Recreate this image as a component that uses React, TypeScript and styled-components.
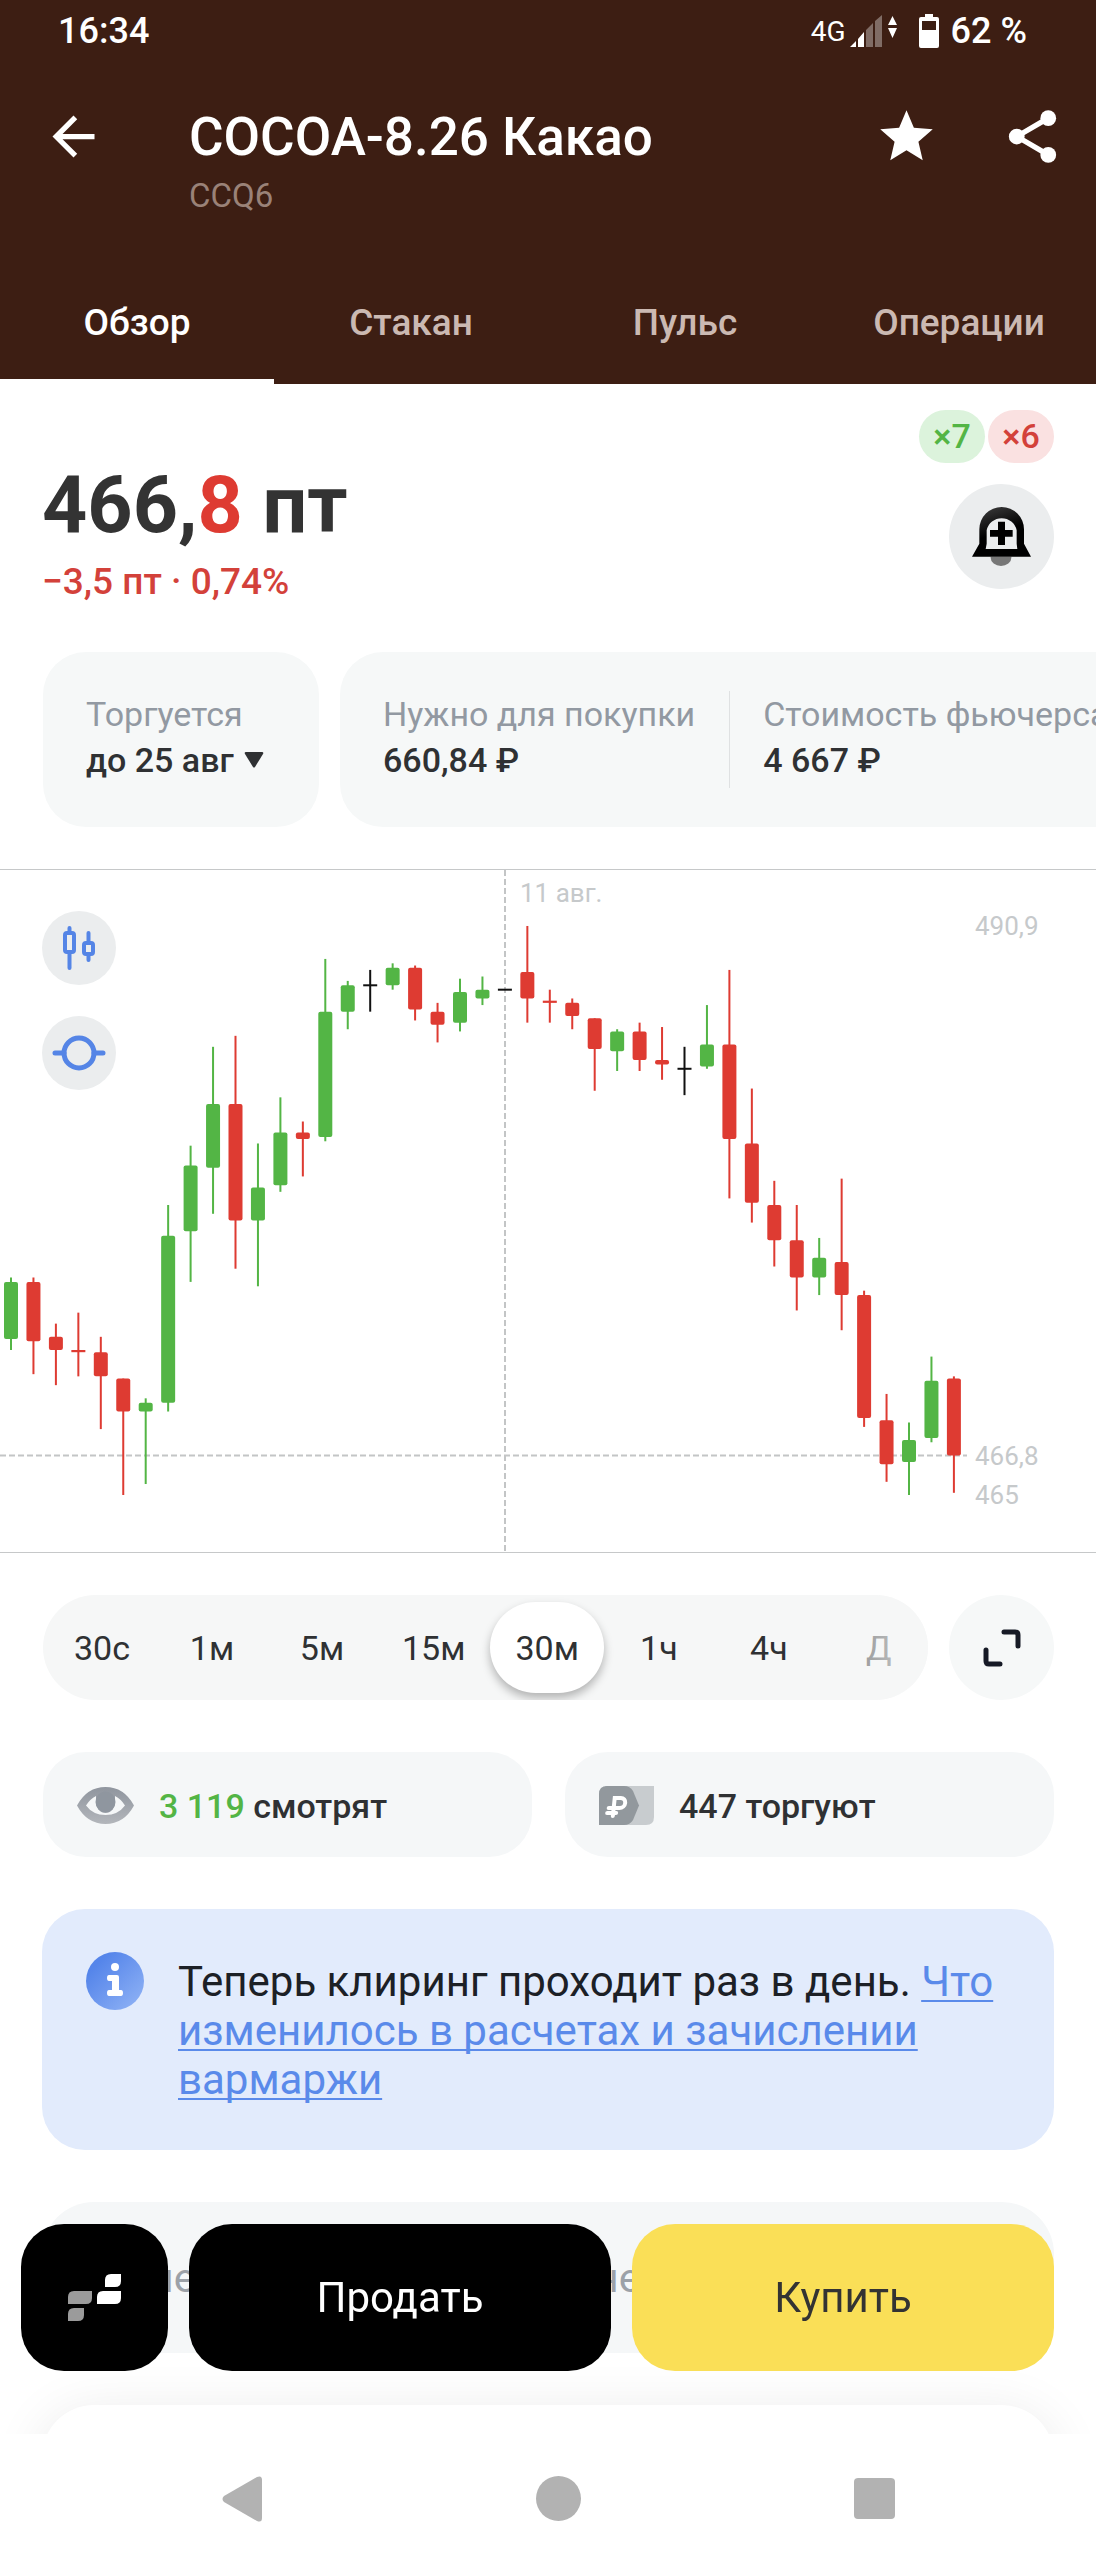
import React, { useState } from "react";
import styled, { createGlobalStyle } from "styled-components";

const GlobalStyle = createGlobalStyle`
  *, *::before, *::after { box-sizing: border-box; }
  body {
    margin: 0;
    background: #fff;
    color: #2f3133;
    font-family: Roboto, "Noto Sans", sans-serif;
  }
  button, select { font-family: inherit; }
  button {
    border: 0;
    padding: 0;
    background: none;
    color: inherit;
    cursor: pointer;
  }
`;

const GREEN = "#53b545";
const RED = "#de3b32";
const BLACK = "#111";

/* ---------- Header ---------- */

const Header = styled.header`
  background: #3d1e13;
  color: #fff;
`;

const StatusBar = styled.div`
  display: flex;
  align-items: center;
  justify-content: space-between;
  height: 62px;
  padding: 0 69px 0 58px;
  font-size: 36px;
  font-weight: 500;
`;

const StatusIcons = styled.div`
  display: flex;
  align-items: center;
`;

const Network = styled.span`
  margin-right: 3px;
  font-size: 28px;
  font-weight: 400;
`;

const SignalIcon = styled.svg`
  width: 50px;
  height: 34px;
  margin-right: 20px;
`;

const BatteryIcon = styled.svg`
  width: 20px;
  height: 34px;
  margin-right: 12px;
`;

const Toolbar = styled.div`
  display: flex;
  align-items: flex-start;
  height: 198px;
  padding: 44px 32px 0 42px;
`;

const ToolButton = styled.button`
  display: flex;
  align-items: center;
  height: 60px;
  svg {
    width: 63px;
    height: 63px;
    fill: currentColor;
  }
`;

const Heading = styled.div`
  flex: 1;
  margin-left: 84px;
`;

const Title = styled.h1`
  margin: 0 0 8px;
  font-size: 53px;
  font-weight: 500;
  line-height: 62px;
`;

const Ticker = styled.div`
  color: #9a8278;
  font-size: 33px;
  line-height: 40px;
`;

const Tools = styled.div`
  display: flex;
  gap: 63px;
`;

const Tabs = styled.nav`
  display: grid;
  grid-template-columns: repeat(4, 1fr);
`;

const Tab = styled.button<{ $active: boolean }>`
  height: 124px;
  padding-top: 5px;
  border-bottom: 5px solid ${(p) => (p.$active ? "#fff" : "transparent")};
  color: ${(p) => (p.$active ? "#fff" : "#cbb9b2")};
  font-size: 37px;
  font-weight: 500;
`;

/* ---------- Price ---------- */

const Summary = styled.section`
  display: flex;
  justify-content: space-between;
  padding: 26px 42px 0;
`;

const PriceBlock = styled.div`
  padding-top: 48px;
`;

const Price = styled.div`
  margin-bottom: 8px;
  color: #333;
  font-size: 79px;
  font-weight: 700;
  line-height: 94px;
`;

const PriceTail = styled.span`
  color: ${RED};
`;

const Change = styled.div`
  color: #d3413a;
  font-size: 37px;
  font-weight: 500;
  line-height: 44px;
`;

const SummaryAside = styled.div`
  display: flex;
  flex-direction: column;
  align-items: flex-end;
  gap: 21px;
`;

const Badges = styled.div`
  display: flex;
  gap: 3px;
`;

const Badge = styled.span<{ $tone: "up" | "down" }>`
  min-width: 66px;
  height: 53px;
  padding: 0 14px;
  border-radius: 27px;
  background: ${(p) => (p.$tone === "up" ? "#dcf3dc" : "#fae1e1")};
  color: ${(p) => (p.$tone === "up" ? GREEN : "#d3413a")};
  font-size: 34px;
  font-weight: 500;
  line-height: 53px;
  text-align: center;
`;

const RoundButton = styled.button<{ $size: number; $tone: string }>`
  display: flex;
  flex: none;
  align-items: center;
  justify-content: center;
  width: ${(p) => p.$size}px;
  height: ${(p) => p.$size}px;
  border-radius: 50%;
  background: ${(p) => p.$tone};
`;

/* ---------- Contract facts ---------- */

const Facts = styled.section`
  display: flex;
  gap: 21px;
  margin: 48px 0 42px;
  padding-left: 43px;
  overflow: hidden;
`;

const FactCard = styled.div`
  display: flex;
  flex: none;
  min-width: 276px;
  height: 175px;
  padding: 39px 43px;
  border-radius: 43px;
  background: #f6f8f8;
`;

const Fact = styled.div`
  display: flex;
  flex-direction: column;
  font-size: 34px;
  line-height: 46px;
  white-space: nowrap;
  & + & {
    margin-left: 34px;
    padding-left: 33px;
    border-left: 1px solid #dfe1e2;
  }
`;

const FactLabel = styled.label`
  color: #9299a2;
`;

const FactValue = styled.span`
  color: #2f3133;
  font-weight: 500;
`;

const Expiry = styled.span`
  display: flex;
  align-items: center;
  gap: 10px;
`;

const ExpirySelect = styled.select`
  height: 46px;
  padding: 0;
  border: 0;
  appearance: none;
  background: none;
  color: #2f3133;
  font-size: 34px;
  font-weight: 500;
`;

/* ---------- Chart ---------- */

const ChartPanel = styled.section`
  position: relative;
  border-top: 1px solid #c6c8c9;
  border-bottom: 1px solid #c6c8c9;
`;

const ChartSvg = styled.svg`
  display: block;
  width: 100%;
  text {
    fill: #c6c9cb;
    font-size: 26px;
  }
`;

const ChartTools = styled.div`
  position: absolute;
  top: 41px;
  left: 42px;
  display: flex;
  flex-direction: column;
  gap: 31px;
`;

type Color = "g" | "r" | "k";
/* colour, high, body top, body bottom, low — in 0.1 pt ticks above 465 */
const CANDLES: [Color, number, number, number, number][] = [
  ["g", 99, 97, 71, 66], ["r", 99, 97, 70, 55], ["r", 78, 72, 66, 50], ["r", 83, 66, 65, 54],
  ["r", 72, 65, 54, 30], ["r", 53, 53, 38, 0], ["g", 44, 42, 38, 5], ["g", 132, 118, 42, 38],
  ["g", 159, 150, 120, 97], ["g", 204, 178, 149, 128], ["r", 209, 178, 125, 103], ["g", 160, 140, 125, 95],
  ["g", 181, 165, 141, 138], ["r", 170, 165, 162, 145], ["g", 244, 220, 163, 161], ["g", 234, 232, 220, 212],
  ["k", 239, 232, 232, 220], ["g", 242, 240, 232, 230], ["r", 241, 240, 221, 216], ["r", 224, 220, 214, 206],
  ["g", 235, 229, 215, 211], ["g", 236, 230, 226, 223], ["k", 230, 230, 230, 230], ["r", 259, 238, 226, 215],
  ["r", 230, 225, 224, 215], ["r", 226, 224, 218, 212], ["r", 217, 217, 203, 184], ["g", 212, 211, 202, 193],
  ["r", 215, 211, 198, 193], ["r", 213, 198, 196, 189], ["k", 204, 194, 194, 182], ["g", 223, 205, 195, 194],
  ["r", 239, 205, 162, 135], ["r", 185, 160, 133, 124], ["r", 143, 132, 116, 104], ["r", 132, 116, 99, 84],
  ["g", 117, 108, 99, 91], ["r", 144, 106, 91, 75], ["r", 93, 91, 35, 31], ["r", 46, 34, 14, 6],
  ["g", 33, 25, 15, 0], ["g", 63, 52, 26, 24], ["r", 54, 53, 18, 1],
];

const FILL: Record<Color, string> = { g: GREEN, r: RED, k: BLACK };
const yOf = (tick: number) => 625 - tick * 2.197;
const xOf = (i: number) => 11 + i * 22.45;

function CandleChart() {
  return (
    <ChartSvg viewBox="0 0 1096 682" role="img" aria-label="График цены">
      <g stroke="#c3c5c6" strokeWidth="2" strokeDasharray="6 3">
        <line x1="505" y1="0" x2="505" y2="682" />
        <line x1="0" y1={yOf(18)} x2="967" y2={yOf(18)} />
      </g>
      {CANDLES.map(([c, high, top, bottom, low], i) => {
        const x = xOf(i);
        const h = Math.max(2, yOf(bottom) - yOf(top));
        return (
          <g key={i} fill={FILL[c]}>
            <rect x={x - 1} y={yOf(high)} width="2" height={yOf(low) - yOf(high)} />
            <rect x={x - 7} y={yOf(top) - (h === 2 ? 1 : 0)} width="14" height={h} rx={h > 3 ? 2 : 0} />
          </g>
        );
      })}
      <text x="520" y="32">11 авг.</text>
      <text x="975" y="65">490,9</text>
      <text x="975" y="595">466,8</text>
      <text x="975" y="634">465</text>
    </ChartSvg>
  );
}

/* ---------- Timeframes ---------- */

const Timeframes = styled.div`
  display: flex;
  gap: 21px;
  padding: 42px 42px 0 43px;
`;

const TimeTrack = styled.div`
  position: relative;
  display: flex;
  flex: 1;
  min-width: 0;
  height: 105px;
  padding: 7px 4px;
  overflow: hidden;
  border-radius: 53px;
  background: #f6f7f7;
  &::after {
    content: "";
    position: absolute;
    inset: 0 0 0 auto;
    width: 64px;
    background: linear-gradient(90deg, rgba(246, 247, 247, 0.55), rgba(246, 247, 247, 0.85));
    pointer-events: none;
  }
`;

const TimeButton = styled.button<{ $active: boolean }>`
  flex: none;
  min-width: 110px;
  height: 91px;
  padding: 0 25px;
  border-radius: 46px;
  background: ${(p) => (p.$active ? "#fff" : "transparent")};
  box-shadow: ${(p) => (p.$active ? "0 5px 10px rgba(0, 0, 0, 0.28)" : "none")};
  color: #2f3133;
  font-size: 34px;
`;

/* ---------- Activity ---------- */

const Activity = styled.section`
  display: grid;
  grid-template-columns: 1fr 1fr;
  gap: 33px;
  padding: 52px 42px 0 43px;
`;

const ActivityCard = styled.div`
  display: flex;
  align-items: center;
  gap: 25px;
  height: 105px;
  padding: 2px 34px 0;
  border-radius: 43px;
  background: #f5f7f8;
  color: #2f3133;
  font-size: 34px;
  font-weight: 500;
`;

const Watching = styled.span`
  color: ${GREEN};
`;

/* ---------- Notice ---------- */

const Notice = styled.section`
  display: flex;
  gap: 34px;
  margin: 52px 42px 0;
  padding: 43px 43px 46px 44px;
  border-radius: 43px;
  background: #e2ebfc;
  svg { flex: none; }
`;

const NoticeText = styled.p`
  margin: 5px 0 0;
  color: #1c2026;
  font-size: 42px;
  line-height: 49px;
  a {
    color: #5a8aea;
    text-decoration-thickness: 2px;
    text-underline-offset: 4px;
    text-decoration-skip-ink: none;
  }
`;

/* ---------- Content below the actions ---------- */

const Peek = styled.section`
  display: grid;
  grid-template-columns: 445px 1fr;
  align-items: center;
  height: 151px;
  margin: 52px 42px;
  padding: 0 0 0 108px;
  border-radius: 52px;
  background: #f5f7f8;
  color: #9ca1a8;
  font-size: 41px;
`;

const Sheet = styled.section`
  height: 155px;
  margin: 0 42px;
  border-radius: 52px 52px 0 0;
  background: #fff;
  box-shadow: 0 8px 56px rgba(0, 0, 0, 0.09);
`;

/* ---------- Fixed bottom ---------- */

const Dock = styled.div`
  position: fixed;
  right: 0;
  bottom: 0;
  left: 0;
`;

const Actions = styled.div`
  display: grid;
  grid-template-columns: 147px 1fr 1fr;
  gap: 21px;
  padding: 0 42px 63px 21px;
`;

const ActionButton = styled.button<{ $kind: "dark" | "buy" }>`
  display: flex;
  align-items: center;
  justify-content: center;
  height: 147px;
  border-radius: 43px;
  background: ${(p) => (p.$kind === "buy" ? "#fadf57" : "#000")};
  color: ${(p) => (p.$kind === "buy" ? "#333" : "#fff")};
  font-size: 42px;
`;

const SystemNav = styled.nav`
  display: grid;
  grid-template-columns: repeat(3, 1fr);
  height: 126px;
  padding: 3px 64px 0 84px;
  background: #fff;
`;

const NavButton = styled.button`
  display: flex;
  align-items: center;
  justify-content: center;
  svg { fill: #b2b2b2; }
`;

const TABS = ["Обзор", "Стакан", "Пульс", "Операции"];
const FRAMES = ["30с", "1м", "5м", "15м", "30м", "1ч", "4ч", "Д"];

export default function App() {
  const [tab, setTab] = useState("Обзор");
  const [frame, setFrame] = useState("30м");

  return (
    <>
      <GlobalStyle />
      <Header>
        <StatusBar>
          <span>16:34</span>
          <StatusIcons>
            <Network>4G</Network>
            <SignalIcon viewBox="0 0 50 34" fill="#fff">
              <path d="M1 33 7 27V33Z M9 25 15 18V33H9Z" />
              <path opacity=".35" d="M17 16 24 9V33H17Z M26 7 33 1V33H26Z" />
              <path d="M39 11 43.500 2 48 11Z M39 14H48L43.500 24Z" />
            </SignalIcon>
            <BatteryIcon viewBox="0 0 20 34" fill="#fff" fillRule="evenodd">
              <path d="M6 0H14V3H18Q20 3 20 5V32Q20 34 18 34H2Q0 34 0 32V5Q0 3 2 3H6Z M3 7V16H17V7Z" />
            </BatteryIcon>
            <span>62 %</span>
          </StatusIcons>
        </StatusBar>
        <Toolbar>
          <ToolButton aria-label="Назад">
            <svg viewBox="0 0 24 24">
              <path d="M20 11H7.830l5.590-5.590L12 4l-8 8 8 8 1.410-1.410L7.830 13H20v-2z" />
            </svg>
          </ToolButton>
          <Heading>
            <Title>COCOA-8.26 Какао</Title>
            <Ticker>CCQ6</Ticker>
          </Heading>
          <Tools>
            <ToolButton aria-label="В избранное">
              <svg viewBox="0 0 24 24">
                <path d="M12 17.270 18.180 21l-1.640-7.030L22 9.240l-7.190-.61L12 2 9.190 8.630 2 9.240l5.460 4.730L5.820 21z" />
              </svg>
            </ToolButton>
            <ToolButton aria-label="Поделиться">
              <svg viewBox="0 0 24 24">
                <path d="M6 12 18 5M6 12 18 19" stroke="currentColor" strokeWidth="2" />
                <circle cx="6" cy="12" r="3" />
                <circle cx="18" cy="5" r="3" />
                <circle cx="18" cy="19" r="3" />
              </svg>
            </ToolButton>
          </Tools>
        </Toolbar>
        <Tabs>
          {TABS.map((t) => (
            <Tab key={t} $active={t === tab} onClick={() => setTab(t)}>
              {t}
            </Tab>
          ))}
        </Tabs>
      </Header>

      <main>
        <Summary>
          <PriceBlock>
            <Price>
              466,<PriceTail>8</PriceTail> пт
            </Price>
            <Change>−3,5 пт · 0,74%</Change>
          </PriceBlock>
          <SummaryAside>
            <Badges>
              <Badge $tone="up">×7</Badge>
              <Badge $tone="down">×6</Badge>
            </Badges>
            <RoundButton $size={105} $tone="#ebedee" aria-label="Добавить уведомление">
              <svg width="59" height="59" viewBox="0 0 177 177">
                <defs>
                  <linearGradient id="bell" x1="0" y1="0" x2=".4" y2="1">
                    <stop offset="0" stopColor="#444" />
                    <stop offset=".6" stopColor="#000" />
                  </linearGradient>
                </defs>
                <path d="M56 149H118V152A31 25 0 0 1 56 152Z" fill="#777" />
                <path
                  fill="url(#bell)"
                  fillRule="evenodd"
                  d="M0 149 22 110V67A67 67 0 0 1 156 67V110L177 149Z M41 126H136L134 110V70A46 46 0 0 0 44 70V110Z"
                />
                <path d="M78 44H99V69H122V89H99V114H78V89H54V69H78Z" />
              </svg>
            </RoundButton>
          </SummaryAside>
        </Summary>

        <Facts>
          <FactCard>
            <Fact>
              <FactLabel htmlFor="expiry">Торгуется</FactLabel>
              <Expiry>
                <ExpirySelect id="expiry">
                  <option>до 25 авг</option>
                </ExpirySelect>
                <svg width="20" height="16" viewBox="0 0 20 16" fill="#2f3133">
                  <path d="M2 0H18Q20 0 19 2L11 15Q10 16 9 15L1 2Q0 0 2 0Z" />
                </svg>
              </Expiry>
            </Fact>
          </FactCard>
          <FactCard>
            <Fact>
              <FactLabel as="span">Нужно для покупки</FactLabel>
              <FactValue>660,84 ₽</FactValue>
            </Fact>
            <Fact>
              <FactLabel as="span">Стоимость фьючерса</FactLabel>
              <FactValue>4 667 ₽</FactValue>
            </Fact>
          </FactCard>
        </Facts>

        <ChartPanel>
          <CandleChart />
          <ChartTools>
            <RoundButton $size={74} $tone="#ebedee" aria-label="Вид графика">
              <svg width="34" height="46" viewBox="0 0 34 46" fill="none" stroke="#5585e6" strokeWidth="4" strokeLinecap="round">
                <rect x="3" y="8" width="9" height="19" rx="2" />
                <path d="M7.500 3V7M7.500 28V43" />
                <rect x="22" y="18" width="9" height="11" rx="2" />
                <path d="M26.500 8V17M26.500 30V35" />
              </svg>
            </RoundButton>
            <RoundButton $size={74} $tone="#ebedee" aria-label="Индикаторы">
              <svg width="54" height="36" viewBox="0 0 54 36" fill="none" stroke="#5585e6" strokeWidth="5" strokeLinecap="round">
                <circle cx="27" cy="18" r="15" />
                <path d="M3 18H12M42 18H51" />
              </svg>
            </RoundButton>
          </ChartTools>
        </ChartPanel>

        <Timeframes>
          <TimeTrack>
            {FRAMES.map((f) => (
              <TimeButton key={f} $active={f === frame} aria-pressed={f === frame} onClick={() => setFrame(f)}>
                {f}
              </TimeButton>
            ))}
          </TimeTrack>
          <RoundButton $size={105} $tone="#f6f8f8" aria-label="На весь экран">
            <svg width="38" height="38" viewBox="0 0 38 38" fill="none" stroke="#161a26" strokeWidth="5" strokeLinecap="round">
              <path d="M21 3H32Q35 3 35 6V17M3 21V32Q3 35 6 35H17" />
            </svg>
          </RoundButton>
        </Timeframes>

        <Activity>
          <ActivityCard>
            <svg width="57" height="41" viewBox="0 0 57 41">
              <defs>
                <linearGradient id="eye" x1="0" y1="0" x2="0" y2="1">
                  <stop offset="0" stopColor="#8f959e" />
                  <stop offset="1" stopColor="#b3b6bb" />
                </linearGradient>
              </defs>
              <path
                fill="url(#eye)"
                fillRule="evenodd"
                d="M0 20.500Q10 2 28.500 2T57 20.500Q47 39 28.500 39T0 20.500Z M9 20.500Q16 30 28.500 30T48 20.500Q44 14 38 11V17A9.500 11 0 0 1 19 17V11Q13 14 9 20.500Z"
              />
              <ellipse cx="28.500" cy="17" rx="10" ry="10.500" fill="#8f969f" />
            </svg>
            <span>
              <Watching>3 119</Watching> смотрят
            </span>
          </ActivityCard>
          <ActivityCard>
            <svg width="55" height="39" viewBox="0 0 55 39">
              <path d="M6 0H55V31Q55 39 47 39H6Z" fill="#c8cccf" />
              <path d="M8 0H25Q31 0 34 5L40 19.500L34 34Q31 39 25 39H0V8Q0 0 8 0Z" fill="#92989d" />
              <path d="M15 30V12H21A5 5 0 0 1 21 22H10M9 27H18" fill="none" stroke="#fff" strokeWidth="4" strokeLinecap="round" transform="skewX(-6) translate(2 0)" />
            </svg>
            <span>447 торгуют</span>
          </ActivityCard>
        </Activity>

        <Notice>
          <svg width="58" height="58" viewBox="0 0 58 58">
            <defs>
              <linearGradient id="info" x1="0" y1="0" x2="1" y2="1">
                <stop offset=".2" stopColor="#5585ea" />
                <stop offset="1" stopColor="#93b5f6" />
              </linearGradient>
            </defs>
            <circle cx="29" cy="29" r="29" fill="url(#info)" />
            <circle cx="29" cy="15" r="4" fill="#fff" />
            <path d="M23 23H31Q33 23 33 25V38H35Q37 38 37 41T35 44H23Q21 44 21 41T23 38H26V29H23Q21 29 21 26T23 23Z" fill="#fff" />
          </svg>
          <NoticeText>
            Теперь клиринг проходит раз в день. <a href="#clearing">Что изменилось в расчетах и зачислении вармаржи</a>
          </NoticeText>
        </Notice>

        <Peek>
          <span>не</span>
          <span>не</span>
        </Peek>
        <Sheet />
      </main>

      <Dock>
        <Actions>
          <ActionButton $kind="dark" aria-label="Терминал">
            <svg width="53" height="47" viewBox="0 0 53 47">
              <g fill="#fff">
                <path d="M43 0H53V7Q53 13 47 13H37V6Q37 0 43 0Z" />
                <path d="M35 17H53V24Q53 30 47 30H29V23Q29 17 35 17Z" />
              </g>
              <g fill="#9b9b9b">
                <path d="M6 17H24V24Q24 30 18 30H0V23Q0 17 6 17Z" />
                <path d="M6 34H16V41Q16 47 10 47H0V40Q0 34 6 34Z" />
              </g>
            </svg>
          </ActionButton>
          <ActionButton $kind="dark">Продать</ActionButton>
          <ActionButton $kind="buy">Купить</ActionButton>
        </Actions>
        <SystemNav>
          <NavButton aria-label="Назад">
            <svg width="40" height="46" viewBox="0 0 40 46">
              <path d="M35 1Q40 -1 40 4V42Q40 47 35 45L2 26Q-1 23 2 20Z" />
            </svg>
          </NavButton>
          <NavButton aria-label="Домой">
            <svg width="45" height="45" viewBox="0 0 45 45">
              <circle cx="22.500" cy="22.500" r="22.500" />
            </svg>
          </NavButton>
          <NavButton aria-label="Недавние">
            <svg width="41" height="41" viewBox="0 0 41 41">
              <rect width="41" height="41" rx="4" />
            </svg>
          </NavButton>
        </SystemNav>
      </Dock>
    </>
  );
}
